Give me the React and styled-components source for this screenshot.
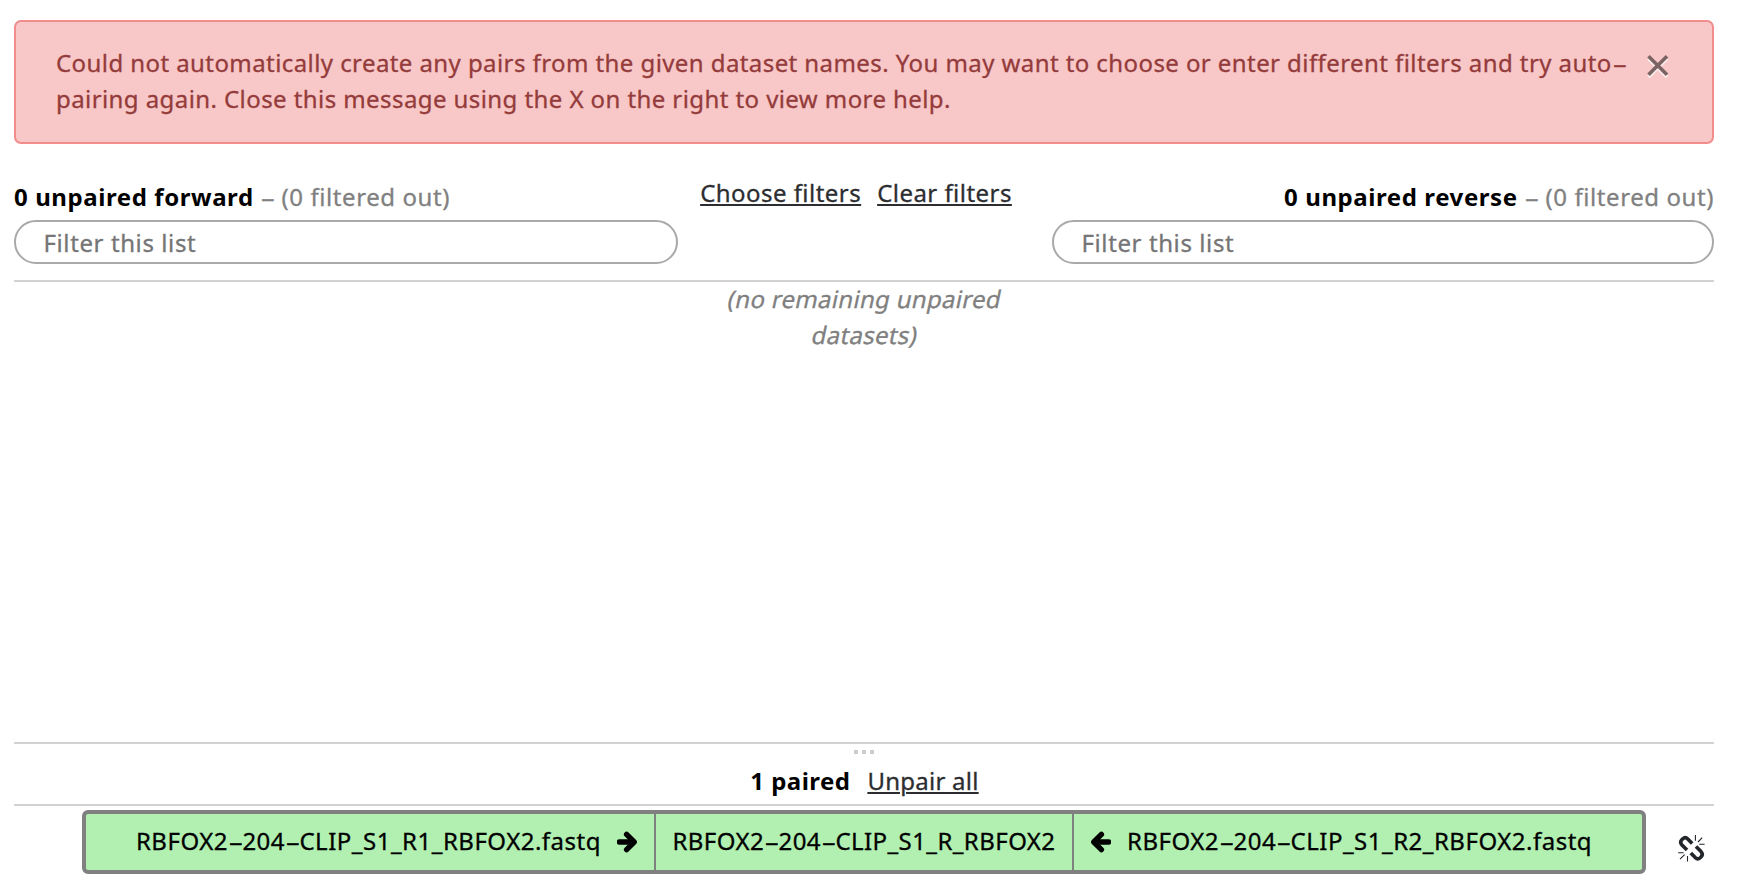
import React from 'react';
import styled, { createGlobalStyle } from 'styled-components';

const GlobalStyle = createGlobalStyle`
  * { box-sizing: border-box; }
  body {
    margin: 0;
    background: #fff;
    color: #000;
    font: 24px/36px "Noto Sans", "Open Sans", sans-serif;
    letter-spacing: 0.42px;
    -webkit-text-stroke: 0.3px;
  }
`;

const Creator = styled.main`
  display: flex;
  flex-direction: column;
  height: 896px;
  padding: 20px 24px 22px 14px;
  overflow: hidden;
`;

const Alert = styled.section`
  display: flex;
  align-items: flex-start;
  height: 124px;
  padding: 23px 44px 25px 40px;
  border: 2px solid #f28d8b;
  border-radius: 7px;
  background: #f8c7c7;
  color: #943b3b;
`;

const AlertText = styled.p`
  flex: 0 0 1580px;
  margin: 0;
`;

const CloseButton = styled.button`
  margin: 9px 0 0 10px;
  padding: 0;
  border: 0;
  background: none;
  line-height: 0;
`;

const Columns = styled.header`
  display: grid;
  grid-template-columns: 664px 374px 662px;
  height: 138px;
  padding-top: 31px;
  border-bottom: 2px solid #d2d2d2;
`;

const Column = styled.div`
  padding-top: 4px;
  text-align: ${(p) => p.$align};
`;

const CountTitle = styled.div`
  height: 41px;
  white-space: nowrap;
`;

const Count = styled.strong`
  font-weight: 700;
  letter-spacing: ${(p) => p.$spacing || '0.58px'};
  -webkit-text-stroke: 0;
`;

const CountInfo = styled.span`
  color: #808080;
  letter-spacing: 0.58px;
`;

const FilterInput = styled.input`
  display: block;
  width: 100%;
  height: 44px;
  padding: 0 27.5px;
  border: 2px solid #a9a9a9;
  border-radius: 22px;
  outline: 0;
  background: #fff;
  font: inherit;
  letter-spacing: 0.6px;
  &::placeholder {
    color: #757575;
    opacity: 1;
  }
`;

const FilterLinks = styled.nav`
  display: flex;
  justify-content: center;
  gap: 16px;
  padding-right: 18px;
`;

const Link = styled.a`
  color: #2c2d30;
  letter-spacing: ${(p) => p.$spacing || '0.46px'};
  text-decoration: underline;
  text-decoration-thickness: 2px;
  text-underline-offset: 2px;
  text-decoration-skip-ink: ${(p) => (p.$skip ? 'auto' : 'none')};
`;

const UnpairedArea = styled.section`
  display: flex;
  justify-content: center;
  align-items: flex-start;
  height: 460px;
`;

const EmptyMessage = styled.p`
  width: 300px;
  margin: -1px 0 0 2px;
  color: #808080;
  letter-spacing: 0.3px;
  text-align: center;
`;

const ObliqueLine = styled.span`
  display: block;
  transform: skewX(-12deg);
`;

const PairedHeader = styled.header`
  display: flex;
  flex-direction: column;
  align-items: center;
  height: 64px;
  border-top: 2px solid #d2d2d2;
  border-bottom: 2px solid #d2d2d2;
`;

const Grip = styled.div`
  display: flex;
  gap: 4px;
  margin: 6px 0 9px;
  padding-right: 1px;
`;

const GripDot = styled.i`
  width: 4px;
  height: 4px;
  background: #ccc;
`;

const PairedTitle = styled.div`
  display: flex;
  gap: 17px;
  padding-left: 1px;
`;

const PairedRow = styled.div`
  display: flex;
  padding: 4px 9px 0 68px;
`;

const Pair = styled.div`
  display: grid;
  grid-template-columns: 568px 420px 568px;
  width: 1564px;
  height: 64px;
  border: 4px solid #808080;
  border-radius: 6px;
  background: #b1f0b1;
`;

const Dataset = styled.div`
  display: flex;
  align-items: center;
  justify-content: ${(p) => p.$justify};
  gap: 16px;
  padding: 0 16px 2px;
  letter-spacing: 0.5px;
  white-space: nowrap;
`;

const PairName = styled(Dataset)`
  border: solid #808080;
  border-width: 0 2px;
  letter-spacing: 0.43px;
`;

const UnpairButton = styled.button`
  align-self: flex-start;
  margin: 24px 0 0 32px;
  padding: 0;
  border: 0;
  background: none;
  line-height: 0;
`;

const WideHyphen = styled.span`
  display: inline-block;
  width: 14.4px;
  text-align: left;
  transform: translateX(0.5px) scaleX(1.9);
  transform-origin: left;
`;

const ArrowSvg = styled.svg`
  flex: none;
  margin-top: 1px;
  transform: ${(p) => (p.$left ? 'scaleX(-1)' : 'none')};
`;

const Hyphen = () => <WideHyphen>-</WideHyphen>;

function DatasetName({ children }) {
  return (
    <span>
      {children.split('-').map((part, i) => (
        <React.Fragment key={i}>
          {i > 0 && <Hyphen />}
          {part}
        </React.Fragment>
      ))}
    </span>
  );
}

function ArrowIcon({ left }) {
  return (
    <ArrowSvg $left={left} width="21" height="22" viewBox="0 0 21 22" fill="none" stroke="#000">
      <path d="M2.4 11H15" strokeWidth="5.4" strokeLinecap="round" />
      <path d="M9.6 3.4 17.2 11 9.6 18.6" strokeWidth="5.4" strokeLinecap="round" strokeLinejoin="round" />
    </ArrowSvg>
  );
}

function CloseIcon() {
  return (
    <svg width="24" height="28" viewBox="0 0 24 28" fill="none" strokeWidth="3.6">
      <path d="M2.5 4.5 21 23M21 4.5 2.5 23" stroke="#fdeeee" />
      <path d="M2.5 2.2 21 20.7M21 2.2 2.5 20.7" stroke="#7b6363" />
    </svg>
  );
}

function UnlinkIcon() {
  return (
    <svg width="28" height="29" viewBox="0 0 28 29" fill="none" stroke="#22262b">
      <g strokeWidth="3.6">
        <path d="M14.2 9.6 9.8 5Q7.3 2.5 4.8 4.8L3.8 5.8Q1.5 8.2 4 11L9 16" />
        <path d="M12.8 19 17.2 23.6Q19.7 26.1 22.2 23.8L23.2 22.8Q25.5 20.4 23 17.6L18 12.6" />
      </g>
      <path
        strokeWidth="1.1"
        d="M17.4 1V6.8M24.2 3.7 20 8M21.2 10.3H26.6M9.5 22V27.6M2 25.2 6.6 20.6M.2 18.7H5.6"
      />
    </svg>
  );
}

function UnpairedColumn({ direction, align }) {
  return (
    <Column $align={align}>
      <CountTitle>
        <Count>0 unpaired {direction}</Count>{' '}
        <CountInfo><Hyphen /> (0 filtered out)</CountInfo>
      </CountTitle>
      <FilterInput placeholder="Filter this list" />
    </Column>
  );
}

export default function App() {
  return (
    <Creator>
      <GlobalStyle />
      <Alert>
        <AlertText>
          Could not automatically create any pairs from the given dataset names. You may want to
          choose or enter different filters and try auto<Hyphen />pairing again. Close this message
          using the X on the right to view more help.
        </AlertText>
        <CloseButton aria-label="Close"><CloseIcon /></CloseButton>
      </Alert>
      <Columns>
        <UnpairedColumn direction="forward" align="left" />
        <FilterLinks>
          <Link>Choose filters</Link>
          <Link>Clear filters</Link>
        </FilterLinks>
        <UnpairedColumn direction="reverse" align="right" />
      </Columns>
      <UnpairedArea>
        <EmptyMessage>
          <ObliqueLine>(no remaining unpaired </ObliqueLine>
          <ObliqueLine>datasets)</ObliqueLine>
        </EmptyMessage>
      </UnpairedArea>
      <PairedHeader>
        <Grip><GripDot /><GripDot /><GripDot /></Grip>
        <PairedTitle>
          <Count $spacing="0.45px">1 paired</Count>
          <Link $spacing="0.25px" $skip>Unpair all</Link>
        </PairedTitle>
      </PairedHeader>
      <PairedRow>
        <Pair>
          <Dataset $justify="flex-end">
            <DatasetName>RBFOX2-204-CLIP_S1_R1_RBFOX2.fastq</DatasetName>
            <ArrowIcon />
          </Dataset>
          <PairName $justify="center">
            <DatasetName>RBFOX2-204-CLIP_S1_R_RBFOX2</DatasetName>
          </PairName>
          <Dataset $justify="flex-start">
            <ArrowIcon left />
            <DatasetName>RBFOX2-204-CLIP_S1_R2_RBFOX2.fastq</DatasetName>
          </Dataset>
        </Pair>
        <UnpairButton aria-label="Unpair"><UnlinkIcon /></UnpairButton>
      </PairedRow>
    </Creator>
  );
}
